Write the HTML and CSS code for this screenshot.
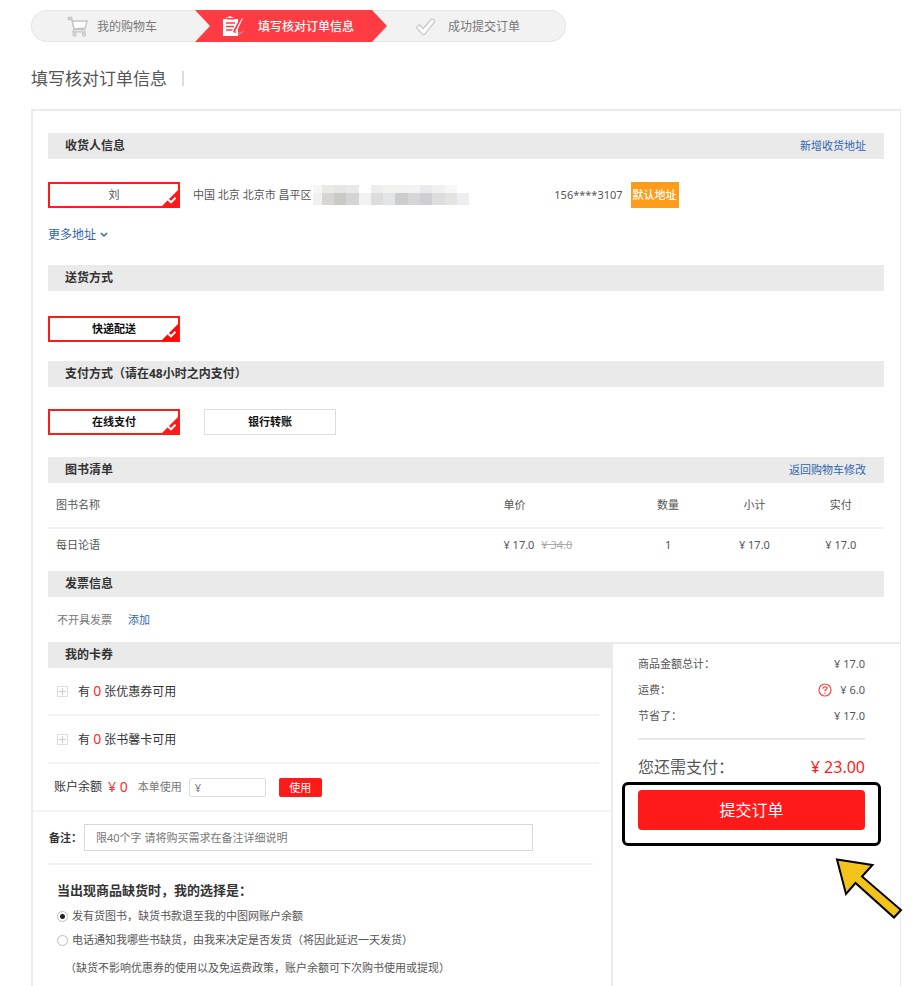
FILE: index.html
```html
<!DOCTYPE html>
<html lang="zh-CN">
<head>
<meta charset="utf-8">
<meta name="viewport" content="width=device-width, initial-scale=1">
<title>填写核对订单信息</title>
<link rel="stylesheet" href="styles.css">
</head>
<body>
<ol class="steps">
  <li class="step step-cart">
    <svg width="22" height="22" viewBox="0 0 22 22" fill="none" stroke="#c4c4c4" stroke-width="1.3">
      <path d="M1.500 1.500h3.200v2H1.500zM4.700 2.500L7 13.500h11.500" />
      <path d="M5.500 5h14.500l-1.700 7-11.300 1z" fill="#fff" />
      <path d="M7 13.500l-1.200 2.300h13" />
      <circle cx="7.500" cy="18.500" r="1.500" /><circle cx="17" cy="18.500" r="1.500" />
    </svg>
    <span>我的购物车</span>
  </li>
  <li class="step step-current" aria-current="step">
    <svg width="22" height="22" viewBox="0 0 22 22">
      <path d="M9 20l4.500-3L22 14.500l-5 4.500z" fill="#d9737b" />
      <path d="M0 3h3V1.500h2.500V.5h3v1H11V3h4v17H0z" fill="#fff" />
      <path d="M3.500 2.800h7.500M3 7h9M3 10.500h8M3 14h6.500" stroke="#ff3b44" stroke-width="1.400" />
      <path d="M18.500 3L12.500 13.500l-1 3" stroke="#ff3b44" stroke-width="3" fill="none" />
      <path d="M19 2L13 13.500l-1 3 2.300-2.200L19.800 2.500z" fill="#fff" />
    </svg>
    <span>填写核对订单信息</span>
  </li>
  <li class="step step-done">
    <svg width="22" height="20" viewBox="0 0 22 20" fill="#fff" stroke="#c8c8c8" stroke-width="1.200" stroke-linejoin="round">
      <path d="M1.500 10.500l2.800-2.800 4 3.800 8-9.500q2.500-.3 3.700 2.500L9.500 17.300h-2z" />
    </svg>
    <span>成功提交订单</span>
  </li>
</ol>

<h1 class="page-title">填写核对订单信息</h1>

<main class="card">
  <section class="block">
    <header class="bar"><h2>收货人信息</h2><a href="#new">新增收货地址</a></header>
    <div class="address">
      <button type="button" class="choice chosen plain" aria-pressed="true">刘
        <svg class="tick" width="18" height="18" viewBox="0 0 18 18"><path d="M18 0v18H0z" fill="#ff1a1a"/><path d="M7 10.500l3 2.800 4.500-4.500" fill="none" stroke="#fff" stroke-width="2"/></svg>
      </button>
      <span class="region">中国 北京 北京市 昌平区</span>
      <svg class="masked" width="156" height="20" viewBox="0 0 156 20" shape-rendering="crispEdges">
        <path d="M0 0h9v8H0z" fill="#f7f5f5"/><path d="M9 0h12v8H9z" fill="#e9e9e7"/><path d="M21 0h12v8H21z" fill="#e6e6e6"/><path d="M33 0h13v8H33z" fill="#e9e9e9"/><path d="M58 0h12v8H58z" fill="#ededed"/><path d="M70 0h12v8H70z" fill="#f2f2f0"/><path d="M82 0h13v8H82z" fill="#f1f1f1"/><path d="M95 0h12v8H95z" fill="#f3f3f5"/><path d="M107 0h12v8h-12z" fill="#eaeaec"/><path d="M119 0h13v8h-13z" fill="#f0f0f0"/><path d="M132 0h12v8h-12z" fill="#f8f6f6"/>
        <path d="M0 8h9v12H0z" fill="#f1eff0"/><path d="M9 8h12v12H9z" fill="#d6d5d3"/><path d="M21 8h12v12H21z" fill="#cacac5"/><path d="M33 8h13v12H33z" fill="#d3d5d5"/><path d="M46 8h12v12H46z" fill="#f1f1ef"/><path d="M58 8h12v12H58z" fill="#dadddc"/><path d="M70 8h12v12H70z" fill="#e2e5e5"/><path d="M82 8h13v12H82z" fill="#cdcdcd"/><path d="M95 8h12v12H95z" fill="#d6d6d8"/><path d="M107 8h12v12h-12z" fill="#d0ced3"/><path d="M119 8h13v12h-13z" fill="#dddde0"/><path d="M132 8h12v12h-12z" fill="#e4e3e2"/><path d="M144 8h12v12h-12z" fill="#ededf2"/>
      </svg>
      <span class="phone">156****3107</span>
      <span class="default-tag">默认地址</span>
    </div>
    <a class="more" href="#more">更多地址
      <svg width="8" height="6" viewBox="0 0 8 6" fill="none" stroke="#2e66ae" stroke-width="1.500"><path d="M1 1l3 3 3-3"/></svg>
    </a>
  </section>

  <section class="block">
    <header class="bar"><h2>送货方式</h2></header>
    <div class="choices choices-delivery">
      <button type="button" class="choice chosen" aria-pressed="true">快递配送
        <svg class="tick" width="18" height="18" viewBox="0 0 18 18"><path d="M18 0v18H0z" fill="#ff0a0a"/><path d="M7 10.500l3 2.800 4.500-4.500" fill="none" stroke="#fff" stroke-width="2"/></svg>
      </button>
    </div>
  </section>

  <section class="block">
    <header class="bar"><h2>支付方式（请在48小时之内支付）</h2></header>
    <div class="choices choices-pay">
      <button type="button" class="choice chosen" aria-pressed="true">在线支付
        <svg class="tick" width="18" height="18" viewBox="0 0 18 18"><path d="M18 0v18H0z" fill="#ff1a1a"/><path d="M7 10.500l3 2.800 4.500-4.500" fill="none" stroke="#fff" stroke-width="2"/></svg>
      </button>
      <button type="button" class="choice" aria-pressed="false">银行转账</button>
    </div>
  </section>

  <section class="block">
    <header class="bar"><h2>图书清单</h2><a href="#cart">返回购物车修改</a></header>
    <table class="books">
      <thead>
        <tr><th class="name" scope="col">图书名称</th><th class="price" scope="col">单价</th><th scope="col">数量</th><th scope="col">小计</th><th scope="col">实付</th></tr>
      </thead>
      <tbody>
        <tr><td class="name">每日论语</td><td class="price">¥ 17.0 <del>¥ 34.0</del></td><td>1</td><td>¥ 17.0</td><td>¥ 17.0</td></tr>
      </tbody>
    </table>
  </section>

  <section class="block">
    <header class="bar"><h2>发票信息</h2></header>
    <p class="invoice"><span>不开具发票</span><a href="#invoice">添加</a></p>
  </section>

  <div class="columns">
    <div class="extras">
      <section class="coupons">
        <header class="bar"><h2>我的卡券</h2></header>
        <div class="coupon">
          <button type="button" class="expand" aria-label="展开优惠券"></button>
          <span>有 <b>0</b> 张优惠券可用</span>
        </div>
        <div class="coupon">
          <button type="button" class="expand" aria-label="展开书馨卡"></button>
          <span>有 <b>0</b> 张书馨卡可用</span>
        </div>
        <div class="balance">
          <span>账户余额</span>
          <b>¥ 0</b>
          <label for="use">本单使用</label>
          <input id="use" type="text" placeholder="¥">
          <button type="button">使用</button>
        </div>
      </section>
      <div class="remark">
        <label for="remark">备注：</label>
        <input id="remark" type="text" placeholder="限40个字 请将购买需求在备注详细说明">
      </div>
      <fieldset class="shortage">
        <legend>当出现商品缺货时，我的选择是：</legend>
        <label><input type="radio" name="shortage" checked>发有货图书，缺货书款退至我的中图网账户余额</label>
        <label><input type="radio" name="shortage">电话通知我哪些书缺货，由我来决定是否发货（将因此延迟一天发货）</label>
        <p>（缺货不影响优惠券的使用以及免运费政策，账户余额可下次购书使用或提现）</p>
      </fieldset>
    </div>

    <aside class="summary">
      <dl class="totals">
        <div><dt>商品金额总计：</dt><dd>¥ 17.0</dd></div>
        <div><dt>运费：</dt><dd>
          <svg width="14" height="14" viewBox="0 0 14 14" fill="none" stroke="#ff4545" stroke-width="1.200"><circle cx="7" cy="7" r="6"/><path d="M5 5.700Q5 3.800 7 3.800T9 5.600Q9 6.700 7 7.200V8.500M7 9.500v1.200"/></svg>
          ¥ 6.0</dd></div>
        <div><dt>节省了：</dt><dd>¥ 17.0</dd></div>
      </dl>
      <p class="payable"><span>您还需支付：</span><b>¥ 23.00</b></p>
      <div class="submit">
        <button type="submit">提交订单</button>
        <svg class="pointer" width="68" height="62" viewBox="0 0 68 62"><path d="M2 2.500L37.500 8 27 19.500 66 53 59 60.500 20.500 26 11 37z" fill="#f3c31c" stroke="#000" stroke-width="2"/></svg>
      </div>
    </aside>
  </div>
</main>
</body>
</html>
```
FILE: styles.css
```css
* {
  box-sizing: border-box;
}

body {
  display: flex;
  flex-direction: column;
  min-height: 100vh;
  margin: 0;
  padding: 10px 19px 0 31px;
  background: #fff;
  color: #555;
  font: 11px/16px "Noto Sans", "Noto Sans CJK SC", sans-serif;
}

h1, h2, p, dl, dd, ol, fieldset {
  margin: 0;
  padding: 0;
  border: 0;
}

button, input {
  font: inherit;
}

button {
  padding: 0;
  cursor: pointer;
}

a {
  color: #2e66ae;
  text-decoration: none;
}

svg {
  flex: none;
}

/* Progress */
.steps {
  display: grid;
  grid-template-columns: 164fr 192fr 179fr;
  width: 100%;
  max-width: 535px;
  height: 32px;
  border-radius: 16px;
  background: #f2f2f2;
  box-shadow: inset 0 0 0 1px #e6e6e6;
  list-style: none;
  font-size: 12px;
  line-height: 18px;
}

.step {
  display: flex;
  align-items: center;
  gap: 8px;
  padding-top: 1px;
  color: #777;
}

.step-cart {
  padding-left: 36px;
}

.step-current {
  gap: 13px;
  padding-left: 28px;
  background: #ff3b44;
  color: #fff;
  font-weight: 500;
  clip-path: polygon(0 0, calc(100% - 15px) 0, 100% 50%, calc(100% - 15px) 100%, 0 100%, 15px 50%);
}

.step-done {
  gap: 11px;
  padding-left: 28px;
}

.page-title {
  display: flex;
  align-items: center;
  gap: 15px;
  margin: 25px 0 19px;
  font-size: 17px;
  line-height: 23px;
  font-weight: 400;
}

.page-title::after {
  content: "";
  width: 2px;
  height: 15px;
  background: #ddd;
}

/* Card */
.card {
  display: flex;
  flex-direction: column;
  flex: 1;
  padding-top: 22px;
  border: 2px solid #ebebeb;
  border-right-width: 1px;
  border-bottom: 0;
}

.block {
  margin: 0 16px 0 15px;
}

.bar {
  display: flex;
  align-items: center;
  justify-content: space-between;
  height: 26px;
  padding: 0 18px 0 17px;
  background: #eaeaea;
}

.bar h2 {
  color: #333;
  font-size: 12px;
  font-weight: 700;
}

.choice {
  position: relative;
  width: 132px;
  height: 26px;
  border: 1px solid #ddd;
  background: #fff;
  color: #111;
  font-weight: 700;
}

.choice.chosen {
  border: 2px solid #ff1a1a;
}

.choice.plain {
  color: #555;
  font-weight: 400;
}

.tick {
  position: absolute;
  right: -1px;
  bottom: -1px;
}

.address {
  display: flex;
  align-items: center;
  margin-top: 23px;
}

.region {
  margin: 0 1px 0 13px;
}

.phone {
  width: 154px;
  text-align: right;
}

.default-tag {
  margin-left: 8px;
  padding: 5px 2px;
  background: #ff9c1a;
  color: #fff;
  font-weight: 500;
}

.more {
  display: flex;
  align-items: center;
  gap: 4px;
  margin: 19px 0 22px;
  font-size: 12px;
}

.choices {
  display: flex;
  gap: 24px;
}

.choices-delivery {
  margin: 25px 0 19px;
}

.choices-pay {
  margin: 22px 0;
}

/* Book list */
.books {
  width: 100%;
  margin-bottom: 10px;
  border-collapse: collapse;
  table-layout: fixed;
}

.books th,
.books td {
  padding: 0;
  font-weight: 400;
  text-align: center;
}

.books th {
  height: 45px;
  border-bottom: 2px solid #f2f2f5;
}

.books td {
  height: 33px;
}

.books .name {
  width: 54%;
  padding-left: 8px;
  text-align: left;
}

.books .price {
  width: 15%;
  padding-left: 4px;
  text-align: left;
}

.books del {
  margin-left: 4px;
  color: #aaa;
}

.invoice {
  display: flex;
  gap: 16px;
  padding: 15px 9px 14px;
  color: #777;
}

/* Lower area */
.columns {
  display: grid;
  grid-template-columns: 578fr 289fr;
  flex: 1;
}

.coupons {
  padding-left: 15px;
  border-bottom: 2px solid #f2f2f7;
}

.coupon {
  display: flex;
  align-items: center;
  gap: 10px;
  height: 48px;
  margin-right: 12px;
  padding-left: 9px;
  border-bottom: 2px solid #f2f2f7;
  color: #333;
  font-size: 12px;
}

.coupon b,
.balance b {
  color: #ff2a2a;
  font-size: 14px;
  font-weight: 400;
}

.expand {
  width: 11px;
  height: 11px;
  border: 1px solid #ddd;
  background:
    linear-gradient(#ccc, #ccc) center / 7px 1px no-repeat,
    linear-gradient(#ccc, #ccc) center / 1px 7px no-repeat,
    #fff;
}

.balance {
  display: flex;
  align-items: center;
  height: 46px;
  padding-left: 6px;
  color: #333;
  font-size: 12px;
}

.balance b {
  margin: 0 10px 0 6px;
}

.balance label {
  color: #777;
  font-size: 11px;
}

.balance input {
  width: 77px;
  height: 19px;
  margin: 0 13px 0 7px;
  padding: 0 5px;
  border: 1px solid #ddd;
  border-radius: 2px;
  font-size: 11px;
}

.balance button {
  width: 43px;
  height: 19px;
  border: 0;
  border-radius: 2px;
  background: #ff1a1a;
  color: #fff;
  font-size: 11px;
  line-height: 19px;
}

input::placeholder {
  color: #777;
  opacity: 1;
}

.remark {
  display: flex;
  align-items: center;
  gap: 2px;
  height: 53px;
  margin: 0 18px 0 16px;
  border-bottom: 2px solid #f3f3f3;
}

.remark label {
  color: #333;
  font-weight: 700;
}

.remark input {
  flex: 1;
  height: 27px;
  margin-right: 60px;
  padding: 0 11px;
  border: 1px solid #d8d8d8;
}

.shortage {
  padding: 15px 0 12px 24px;
}

.shortage legend {
  float: left;
  width: 100%;
  margin-bottom: 4px;
  padding: 0;
  color: #333;
  font-size: 13px;
  line-height: 20px;
  font-weight: 700;
}

.shortage label {
  display: flex;
  clear: both;
  align-items: center;
  gap: 4px;
  height: 24px;
  white-space: nowrap;
}

.shortage input {
  appearance: none;
  width: 11px;
  height: 11px;
  margin: 0;
  border: 1px solid #bbb;
  border-radius: 50%;
  background: #fff;
}

.shortage input:checked {
  background: radial-gradient(circle, #222 0 2px, #fff 3px);
}

.shortage p {
  padding: 8px 0 0 8px;
  white-space: nowrap;
}

/* Summary */
.summary {
  padding: 7px 35px 0 25px;
  border-top: 2px solid #ebebeb;
  border-left: 2px solid #ebebeb;
}

.totals {
  padding-bottom: 9px;
  border-bottom: 2px solid #e8e8e8;
}

.totals div,
.payable {
  display: flex;
  align-items: center;
  justify-content: space-between;
}

.totals div {
  height: 26px;
}

.totals dd {
  display: flex;
  align-items: center;
  gap: 8px;
}

.payable {
  margin: 15px 0 11px;
  font-size: 16px;
  line-height: 24px;
}

.payable b {
  color: #ff1a1a;
  font-weight: 400;
}

.submit {
  position: relative;
}

.submit button {
  width: 100%;
  height: 40px;
  border: 0;
  border-radius: 4px;
  background: #ff1a1a;
  color: #fff;
  font-size: 16px;
}

/* Highlight frame around the submit button */
.submit::before {
  content: "";
  position: absolute;
  inset: -8px -16px -16px;
  border: 3px solid #000;
  border-radius: 6px;
  pointer-events: none;
}

.pointer {
  position: absolute;
  top: 67px;
  right: -38px;
}
```
